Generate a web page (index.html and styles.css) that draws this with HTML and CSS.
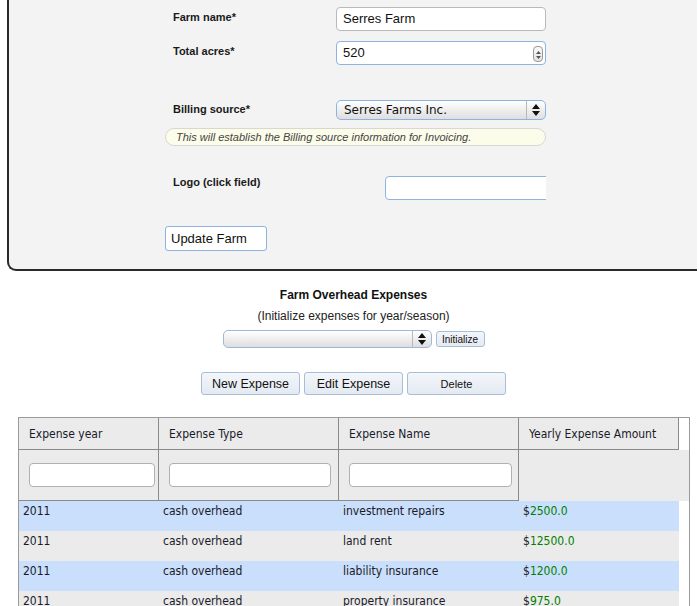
FILE: index.html
```html
<!DOCTYPE html>
<html>
<head>
<meta charset="utf-8">
<link rel="stylesheet" href="styles.css">
</head>
<body>
<div class="panel">
  <div class="frow r1">
    <div class="lbl">Farm name*</div>
    <div class="txt plain">Serres Farm</div>
  </div>
  <div class="frow r2">
    <div class="lbl">Total acres*</div>
    <div class="txt blue num">520
      <span class="spin"><svg width="7" height="13" viewBox="0 0 7 13"><path d="M3.5 3 L6 6 H1 Z M3.5 11 L1 8 H6 Z" fill="#555"/></svg></span>
    </div>
  </div>
  <div class="frow r3">
    <div class="lbl lbl3">Billing source*</div>
    <div class="sel big"><span class="selval">Serres Farms Inc.</span><span class="arr"><svg width="8" height="12" viewBox="0 0 8 12"><path d="M4 0 L8 5 H0 Z M4 12 L0 7 H8 Z" fill="#111"/></svg></span></div>
  </div>
  <div class="hint">This will establish the Billing source information for Invoicing.</div>
  <div class="frow r4">
    <div class="lbl lbl4">Logo (click field)</div>
    <div class="logo"><div class="txt blue logoin"></div></div>
  </div>
  <button class="upd">Update Farm</button>
</div>

<div class="center">
  <div class="title">Farm Overhead Expenses</div>
  <div class="sub">(Initialize expenses for year/season)</div>
  <div class="initrow">
    <div class="sel small"><span class="selval"></span><span class="arr"><svg width="8" height="12" viewBox="0 0 8 12"><path d="M4 0 L8 5 H0 Z M4 12 L0 7 H8 Z" fill="#111"/></svg></span></div>
    <button class="btn initb">Initialize</button>
  </div>
  <div class="btnrow">
    <button class="btn act">New Expense</button>
    <button class="btn act">Edit Expense</button>
    <button class="btn act del">Delete</button>
  </div>
</div>

<div class="grid">
  <div class="hrow">
    <div class="hc c1">Expense year</div>
    <div class="hc c2">Expense Type</div>
    <div class="hc c3">Expense Name</div>
    <div class="hc c4">Yearly Expense Amount</div>
  </div>
  <div class="frow2">
    <div class="fc c1"><div class="fin w1"></div></div>
    <div class="fc c2"><div class="fin w2"></div></div>
    <div class="fc c3"><div class="fin w3"></div></div>
    <div class="fc c4 last"></div>
  </div>
  <div class="drow odd">
    <div class="dc c1">2011</div><div class="dc c2">cash overhead</div><div class="dc c3">investment repairs</div><div class="dc c4">$<span class="g">2500.0</span></div>
  </div>
  <div class="drow even">
    <div class="dc c1">2011</div><div class="dc c2">cash overhead</div><div class="dc c3">land rent</div><div class="dc c4">$<span class="g">12500.0</span></div>
  </div>
  <div class="drow odd">
    <div class="dc c1">2011</div><div class="dc c2">cash overhead</div><div class="dc c3">liability insurance</div><div class="dc c4">$<span class="g">1200.0</span></div>
  </div>
  <div class="drow even">
    <div class="dc c1">2011</div><div class="dc c2">cash overhead</div><div class="dc c3">property insurance</div><div class="dc c4">$<span class="g">975.0</span></div>
  </div>
</div>
</body>
</html>
```
FILE: styles.css
```css
html, body {
  margin: 0;
  padding: 0;
  background: #fff;
  overflow: hidden;
  font-family: "Liberation Sans", Arial, sans-serif;
  color: #111;
}
.panel {
  margin-left: 7px;
  width: 690px;
  height: 271px;
  box-sizing: border-box;
  background: #f3f3f3;
  border-left: 2px solid #2a2a2a;
  border-bottom: 2px solid #2a2a2a;
  border-bottom-left-radius: 9px;
  padding: 7px 0 0 156px;
  display: flex;
  flex-direction: column;
  align-items: flex-start;
}
.frow {
  display: flex;
  align-items: flex-start;
  width: 381px;
}
.lbl {
  width: 163px;
  padding-left: 8px;
  font-size: 11px;
  font-weight: bold;
  line-height: 13px;
  padding-top: 4px;
  color: #1a1a1a;
}
.r2 { margin-top: 10px; }
.r3 { margin-top: 35px; }
.lbl3 { padding-top: 3px; }
.txt {
  width: 210px;
  height: 24px;
  box-sizing: border-box;
  background: #fff;
  border-radius: 4px;
  font-size: 13px;
  line-height: 22px;
  padding-left: 6px;
  position: relative;
}
.plain { border: 1px solid #b9b9b9; }
.blue { border: 1px solid #8fb3e0; }
.spin {
  position: absolute;
  right: 2px;
  top: 4px;
  width: 8px;
  height: 14px;
  border: 1px solid #999;
  border-radius: 4px;
  background: linear-gradient(#fafafa, #e2e2e2);
  display: flex;
  align-items: center;
  justify-content: center;
}
.sel {
  box-sizing: border-box;
  border: 1px solid #8fb3e0;
  border-radius: 5px;
  background: linear-gradient(#ffffff 0%, #f0f0f0 45%, #dedede 100%);
  display: flex;
  align-items: center;
  position: relative;
}
.sel.big {
  width: 210px;
  height: 20px;
}
.selval {
  flex: 1;
  padding-left: 7px;
  font-family: "DejaVu Sans", sans-serif;
  font-size: 12px;
  color: #111;
}
.arr {
  width: 18px;
  height: 100%;
  border-left: 1px solid #b8b8b8;
  display: flex;
  align-items: center;
  justify-content: center;
}
.hint {
  margin-top: 8px;
  width: 381px;
  height: 18px;
  box-sizing: border-box;
  border: 1px solid #d8d8d0;
  border-radius: 9px;
  background: #fcfcea;
  font-size: 11px;
  font-style: italic;
  color: #444;
  line-height: 16px;
  padding-left: 10px;
}
.r4 { margin-top: 30px; }
.lbl4 { padding-top: 0; width: 212px; }
.logo {
  width: 161px;
  overflow: hidden;
}
.logoin {
  width: 170px;
}
.upd {
  margin-top: 26px;
  width: 102px;
  height: 25px;
  box-sizing: border-box;
  background: #fff;
  border: 1px solid #8fb3e0;
  border-radius: 3px;
  font-family: "Liberation Sans", Arial, sans-serif;
  font-size: 13px;
  text-align: left;
  padding: 0 0 0 5px;
  color: #111;
}
.center {
  margin-left: 8px;
  display: flex;
  flex-direction: column;
  align-items: center;
}
.title {
  margin-top: 17px;
  font-size: 12px;
  font-weight: bold;
  line-height: 15px;
}
.sub {
  margin-top: 6px;
  font-size: 12px;
  line-height: 15px;
  color: #222;
}
.initrow {
  margin-top: 6px;
  display: flex;
  align-items: center;
  gap: 4px;
}
.sel.small {
  width: 209px;
  height: 18px;
  border-color: #9fb8d8;
}
.btn {
  box-sizing: border-box;
  border: 1px solid #a8bed6;
  border-radius: 3px;
  background: linear-gradient(#f3f6fa, #e4eaf2);
  font-family: "Liberation Sans", Arial, sans-serif;
  color: #111;
  padding: 0;
}
.initb {
  width: 49px;
  height: 16px;
  font-size: 10px;
}
.btnrow {
  margin-top: 24px;
  display: flex;
  gap: 4px;
}
.act {
  width: 99px;
  height: 23px;
  font-size: 12.5px;
}
.del { font-size: 11px; }
.grid {
  margin-top: 22px;
  margin-left: 18px;
  width: 672px;
  box-sizing: border-box;
  border: 1px solid #9a9a9a;
  border-bottom: none;
  font-family: "DejaVu Sans", sans-serif;
  font-stretch: condensed;
  font-size: 12px;
  color: #1a1a2a;
}
.hrow, .frow2, .drow {
  display: flex;
}
.c1 { width: 140px; }
.c2 { width: 180px; }
.c3 { width: 180px; }
.c4 { width: 160px; }
.hc {
  box-sizing: border-box;
  height: 32px;
  background: #ebebeb;
  border-right: 1px solid #8a8a8a;
  border-bottom: 1px solid #8a8a8a;
  padding-left: 10px;
  line-height: 32px;
}
.frow2 {
  background: #ebebeb;
  height: 51px;
}
.fc {
  box-sizing: border-box;
  height: 51px;
  border-right: 1px solid #8a8a8a;
  border-bottom: 1px solid #8a8a8a;
  padding: 13px 0 0 10px;
}
.fc.last { border: none; }
.fin {
  height: 24px;
  box-sizing: border-box;
  background: #fff;
  border: 1px solid #b0b0b0;
  border-radius: 4px;
}
.w1 { width: 126px; }
.w2 { width: 162px; }
.w3 { width: 163px; }
.drow {
  width: 660px;
  height: 30px;
}
.odd { background: #c9dffb; }
.even { background: #ebebeb; }
.dc {
  box-sizing: border-box;
  padding: 3px 0 0 4px;
  line-height: 15px;
}
.g { color: #008000; font-weight: 500; }
```
